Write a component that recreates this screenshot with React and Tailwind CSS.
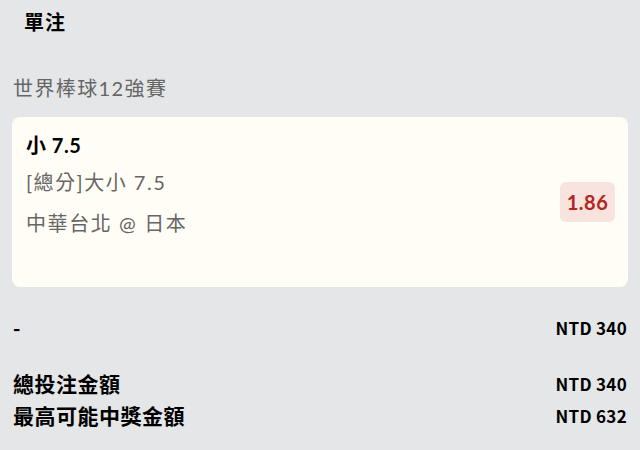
export default function App() {
  return (
    <div
      className="w-full h-[450px] overflow-hidden bg-[#e5e6e8] text-black"
      style={{ fontFamily: '"Lato", "Noto Sans CJK TC", sans-serif' }}
    >
      <div className="h-[44px] flex items-center pl-[24px] text-[20px] font-bold tracking-[1px]">
        單注
      </div>
      <div className="h-[44px] mt-[22px] flex items-center pl-[13px] text-[20px] text-[#666666] tracking-[1.4px]">
        世界棒球12強賽
      </div>
      <div className="mx-[12px] mt-[7px] h-[170px] rounded-[8px] bg-[#fffdf5] flex items-center justify-between pl-[14px] pr-[13px]">
        <div className="self-start pt-[14px] flex flex-col">
          <div className="h-[28px] flex items-center text-[20px] font-bold tracking-[0.5px]">小 7.5</div>
          <div className="h-[28px] mt-[9px] flex items-center text-[20px] text-[#666666] tracking-[1.5px]">[總分]大小 7.5</div>
          <div className="h-[28px] mt-[13px] flex items-center text-[20px] text-[#666666] tracking-[1.6px]">中華台北 @ 日本</div>
        </div>
        <div className="h-[40px] w-[55px] rounded-[6px] bg-[#f8e3de] flex items-center justify-center text-[20px] font-bold text-[#b3261e] tracking-[0.5px]">
          1.86
        </div>
      </div>
      <div
        className="px-[13px] mt-[27px]"
        style={{ fontFamily: '"Noto Sans CJK TC", sans-serif' }}
      >
        <div className="h-[28px] flex items-center justify-between font-bold">
          <span className="text-[20px]">-</span>
          <span className="text-[17px] tracking-[0.3px]">NTD 340</span>
        </div>
        <div className="h-[32px] mt-[26px] flex items-center justify-between font-bold">
          <span className="text-[21px] tracking-[0.5px]">總投注金額</span>
          <span className="text-[17px] tracking-[0.3px]">NTD 340</span>
        </div>
        <div className="h-[32px] flex items-center justify-between font-bold">
          <span className="text-[21px] tracking-[0.5px]">最高可能中獎金額</span>
          <span className="text-[17px] tracking-[0.3px]">NTD 632</span>
        </div>
      </div>
    </div>
  );
}
